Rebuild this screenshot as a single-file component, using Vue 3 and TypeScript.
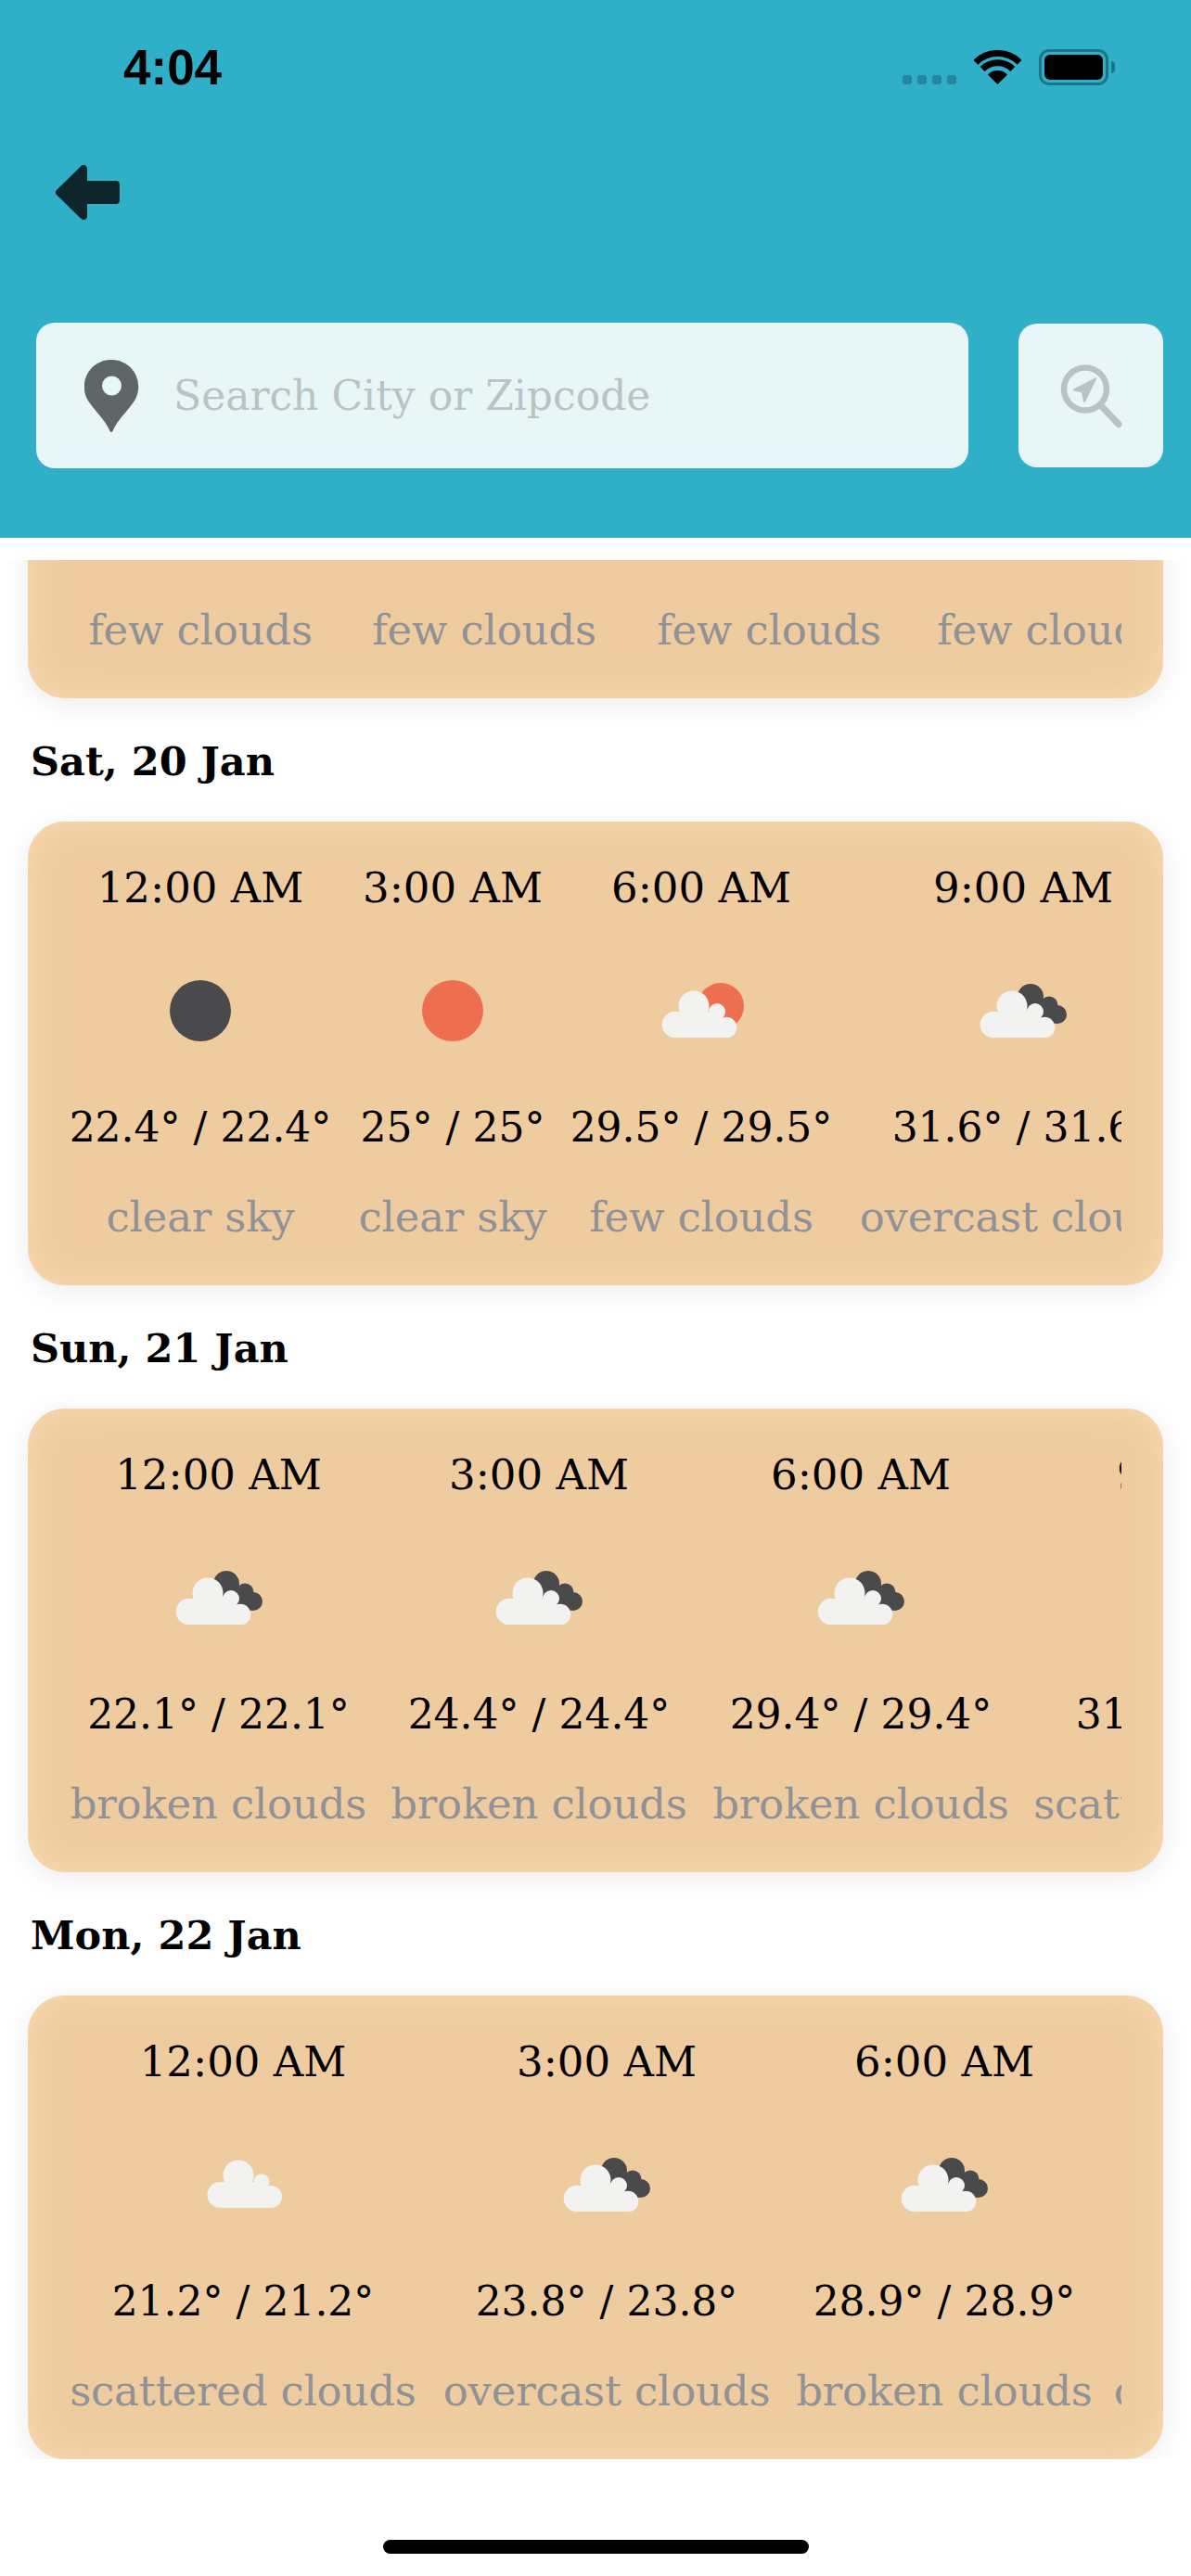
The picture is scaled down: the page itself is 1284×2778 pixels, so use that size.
<script setup lang="ts">
type Icon = 'night' | 'sun' | 'few' | 'dark' | 'cloud';

interface Slot {
  time: string;
  icon: Icon;
  temp: string;
  desc: string;
  width: number;
}

interface Day {
  title: string;
  slots: Slot[];
}

const days: Day[] = [
  {
    title: 'Fri, 19 Jan',
    slots: [
      { time: '12:00 AM', icon: 'few', temp: '22.9° / 22.9°', desc: 'few clouds', width: 308 },
      { time: '3:00 AM', icon: 'few', temp: '25.1° / 25.1°', desc: 'few clouds', width: 304 },
      { time: '6:00 AM', icon: 'few', temp: '29.8° / 29.8°', desc: 'few clouds', width: 310 },
      { time: '9:00 AM', icon: 'few', temp: '31.4° / 31.4°', desc: 'few clouds', width: 294 },
    ],
  },
  {
    title: 'Sat, 20 Jan',
    slots: [
      { time: '12:00 AM', icon: 'night', temp: '22.4° / 22.4°', desc: 'clear sky', width: 308 },
      { time: '3:00 AM', icon: 'sun', temp: '25° / 25°', desc: 'clear sky', width: 236 },
      { time: '6:00 AM', icon: 'few', temp: '29.5° / 29.5°', desc: 'few clouds', width: 300 },
      { time: '9:00 AM', icon: 'dark', temp: '31.6° / 31.6°', desc: 'overcast clouds', width: 394 },
    ],
  },
  {
    title: 'Sun, 21 Jan',
    slots: [
      { time: '12:00 AM', icon: 'dark', temp: '22.1° / 22.1°', desc: 'broken clouds', width: 347 },
      { time: '3:00 AM', icon: 'dark', temp: '24.4° / 24.4°', desc: 'broken clouds', width: 344 },
      { time: '6:00 AM', icon: 'dark', temp: '29.4° / 29.4°', desc: 'broken clouds', width: 350 },
      { time: '9:00 AM', icon: 'cloud', temp: '31.2° / 31.2°', desc: 'scattered clouds', width: 396 },
    ],
  },
  {
    title: 'Mon, 22 Jan',
    slots: [
      { time: '12:00 AM', icon: 'cloud', temp: '21.2° / 21.2°', desc: 'scattered clouds', width: 400 },
      { time: '3:00 AM', icon: 'dark', temp: '23.8° / 23.8°', desc: 'overcast clouds', width: 384 },
      { time: '6:00 AM', icon: 'dark', temp: '28.9° / 28.9°', desc: 'broken clouds', width: 344 },
      { time: '9:00 AM', icon: 'dark', temp: '30.7° / 30.7°', desc: 'overcast clouds', width: 374 },
    ],
  },
];
</script>

<template>
  <div class="screen">
    <header class="top">
      <div class="status">
        <span class="clock">4:04</span>
        <div class="status-right">
          <div class="signal"><i></i><i></i><i></i><i></i></div>
          <svg class="wifi" width="51" height="37" viewBox="0 0 51 37">
            <path d="M1.8 13.3A33.5 33.5 0 0 1 49.2 13.3" fill="none" stroke="#000" stroke-width="7" />
            <path d="M9.1 20.6A23.2 23.2 0 0 1 41.9 20.6" fill="none" stroke="#000" stroke-width="7" />
            <path d="M25.5 37L14.9 26.4A15 15 0 0 1 36.1 26.4Z" fill="#000" />
          </svg>
          <div class="battery"><div class="battery-fill"></div></div>
          <div class="battery-cap"></div>
        </div>
      </div>
      <svg class="back" width="72" height="60" viewBox="0 0 72 60">
        <path d="M5 29.500L31 4V21H66V38H31V55Z" fill="#0d262c" stroke="#0d262c" stroke-width="8" stroke-linejoin="round" />
      </svg>
      <div class="search-row">
        <div class="search">
          <svg width="59" height="78" viewBox="0 0 59 78">
            <path
              fill-rule="evenodd"
              d="M29 0A29 29 0 0 1 52 47C44 58 35 66 30.500 77Q29 79 27.500 77C23 66 14 58 6 47A29 29 0 0 1 29 0ZM29.500 17.500A10.500 10.500 0 1 0 29.500 38.500A10.500 10.500 0 1 0 29.500 17.500Z"
              fill="#5f6666"
            />
          </svg>
          <span class="placeholder">Search City or Zipcode</span>
        </div>
        <button type="button" class="locate">
          <svg width="70" height="72" viewBox="0 0 70 72">
            <circle cx="29" cy="28.500" r="23" fill="none" stroke="#b9c3c5" stroke-width="6.500" />
            <path d="M46 46.500L65 66.500" fill="none" stroke="#b9c3c5" stroke-width="7" stroke-linecap="round" />
            <path d="M40 17.500L17 29.500L26 31.500L28 42Z" fill="#b9c3c5" stroke="#b9c3c5" stroke-width="2" stroke-linejoin="round" />
          </svg>
        </button>
      </div>
    </header>

    <main class="scroller">
      <div class="list">
        <section v-for="day in days" :key="day.title" class="day">
          <h2>{{ day.title }}</h2>
          <div class="card">
            <div class="slots">
              <div v-for="slot in day.slots" :key="slot.time" class="slot" :style="{ width: slot.width + 'px' }">
                <div class="time">{{ slot.time }}</div>
                <svg class="icon" width="100" height="70" :viewBox="slot.icon === 'dark' ? '4 0 100 70' : '0 0 100 70'">
                  <circle v-if="slot.icon === 'night'" cx="50" cy="33" r="33" fill="#4a4a4d" />
                  <circle v-if="slot.icon === 'sun'" cx="50" cy="33" r="33" fill="#ee6f4f" />
                  <circle v-if="slot.icon === 'few'" cx="71" cy="28" r="25" fill="#ee6f4f" />
                  <g v-if="slot.icon === 'dark'" fill="#4a4a4d">
                    <circle cx="62" cy="18" r="14" />
                    <circle cx="82" cy="27" r="9.500" />
                    <circle cx="91" cy="37" r="10" />
                    <path d="M60 20L82 20L92 46L70 50Z" />
                  </g>
                  <g v-if="slot.icon === 'few' || slot.icon === 'dark'" fill="#f2f2f1">
                    <circle cx="42" cy="28" r="16.500" />
                    <circle cx="67" cy="34" r="9" />
                    <circle cx="22" cy="48" r="14.300" />
                    <circle cx="77" cy="51" r="11.300" />
                    <path d="M22 34H70L80 62H22Z" />
                  </g>
                  <g v-if="slot.icon === 'cloud'" fill="#f2f2f1">
                    <circle cx="45" cy="23" r="16.500" />
                    <circle cx="70" cy="30" r="8.500" />
                    <circle cx="25.500" cy="44" r="14" />
                    <circle cx="80" cy="46" r="12" />
                    <path d="M26 30H72L80 58H26Z" />
                  </g>
                </svg>
                <div class="temp">{{ slot.temp }}</div>
                <div class="desc">{{ slot.desc }}</div>
              </div>
            </div>
          </div>
        </section>
      </div>
    </main>

    <footer class="home">
      <div class="home-bar"></div>
    </footer>
  </div>
</template>

<style>
html, body { margin: 0; background: #fff; }
</style>

<style scoped>
.screen { width: 1284px; height: 2778px; display: flex; flex-direction: column; background: #fff; overflow: hidden; font-family: "DejaVu Serif", serif; color: #000; }

.top { height: 580px; box-sizing: border-box; background: #2fb0c8; flex: none; display: flex; flex-direction: column; }
.status { height: 39px; margin-top: 53px; padding: 0 82px 0 133px; display: flex; justify-content: space-between; align-items: center; }
.clock { font-family: "Liberation Sans", sans-serif; font-weight: 700; font-size: 53px; line-height: 39px; }
.status-right { display: flex; align-items: flex-end; }
.signal { display: flex; gap: 6px; margin-right: 19px; padding-bottom: 1px; }
.signal i { width: 10px; height: 10px; border-radius: 3px; background: #24889f; }
.wifi { margin-right: 19px; margin-bottom: 1px; }
.battery { width: 75px; height: 39px; box-sizing: border-box; border: 3px solid #1f7388; border-radius: 11px; padding: 3px; }
.battery-fill { width: 100%; height: 100%; background: #000; border-radius: 6px; }
.battery-cap { width: 4px; height: 13px; margin: 0 0 13px 3px; background: #1f7388; border-radius: 0 7px 7px 0; }

.back { margin: 86px 0 0 59px; display: block; flex: none; }

.search-row { margin-top: 110px; padding: 0 30px 0 39px; display: flex; justify-content: space-between; align-items: center; }
.search { width: 1005px; height: 157px; box-sizing: border-box; padding-left: 52px; background: #e8f6f8; border-radius: 20px; display: flex; align-items: center; gap: 37px; }
.placeholder { font-size: 44px; color: #b9c3c5; white-space: nowrap; }
.locate { width: 156px; height: 155px; padding: 0; border: 0; background: #e8f6f8; border-radius: 20px; display: flex; align-items: center; justify-content: center; }

.scroller { margin-top: 24px; height: 2048px; flex: none; overflow: hidden; }
.list { margin-top: -484px; }

.day { height: 633px; box-sizing: border-box; padding: 41px 30px 0; }
h2 { margin: 0 0 37px; padding-left: 3px; height: 55px; font-size: 43px; line-height: 55px; font-weight: 700; white-space: nowrap; }
.card { height: 500px; background: #eecca0; border-radius: 40px; box-shadow: inset 0 0 36px #f9dab0, 0 6px 30px rgba(0, 0, 0, 0.08); padding: 42px 45px 0 32px; box-sizing: border-box; }
.slots { display: flex; overflow: hidden; }
.slot { flex: none; display: flex; flex-direction: column; align-items: center; text-align: center; white-space: nowrap; }
.time { height: 60px; line-height: 60px; font-size: 45px; }
.icon { display: block; margin-top: 69px; flex: none; }
.temp { height: 60px; line-height: 60px; margin-top: 59px; font-size: 44px; }
.desc { height: 60px; line-height: 60px; margin-top: 37px; font-size: 45px; letter-spacing: -0.2px; color: #8f9297; }

.home { flex: 1; position: relative; }
.home-bar { width: 459px; height: 15px; margin: 87px auto 0 413px; background: #000; border-radius: 8px; }
</style>
